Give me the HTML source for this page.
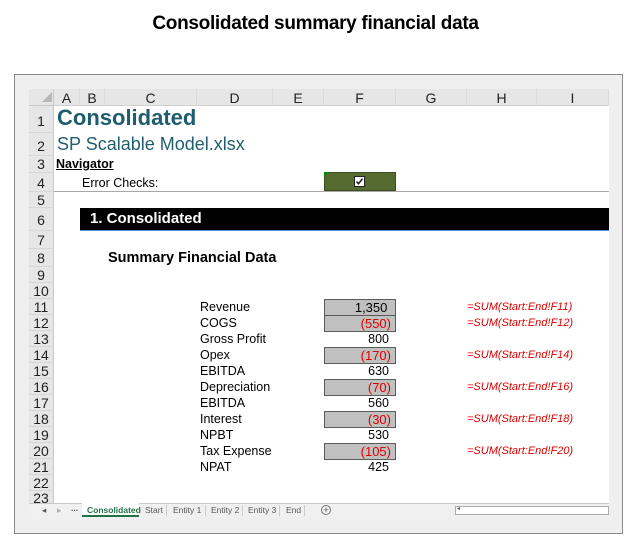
<!DOCTYPE html>
<html><head><meta charset="utf-8"><style>
*{margin:0;padding:0;box-sizing:border-box}
body{width:631px;height:556px;background:#fff;position:relative;overflow:hidden;font-family:"Liberation Sans",Arial,sans-serif}
.a{position:absolute}
.title{left:0;width:631px;top:13px;text-align:center;font-weight:bold;font-size:19px;letter-spacing:-0.3px;color:#000}
.frame{left:14px;top:74px;width:609px;height:460px;border:1px solid #8a8a8a;background:#efefef}
.grid{left:29px;top:89px;width:580px;height:429px;background:#fff;overflow:hidden}
.ch{top:89px;height:17px;background:#e6e6e6;border-right:1px solid #dadada;border-bottom:1px solid #d0d0d0;font-size:14px;text-align:center;line-height:18px;color:#222}
.rh{left:29px;width:25px;background:#e6e6e6;border-bottom:1px solid #d8d8d8;border-right:1px solid #c8c8c8;font-size:14px;text-align:center;color:#222}
.t{font-size:12.5px;color:#000;white-space:nowrap}
.box{background:#c0c0c0;border:1px solid #5a5a5a;font-size:13px;text-align:right;padding-right:4px;line-height:15px}
.red{color:#e00000}
.f{font-size:11px;font-style:italic;color:#e00000;left:467px;white-space:nowrap}
.tab{top:505px;font-size:8.5px;color:#555}
</style></head><body>
<div class="a title">Consolidated summary financial data</div>
<div class="a frame"></div>
<div class="a grid"></div>
<div class="a" style="left:29px;top:89px;width:25px;height:17px;background:#e6e6e6;border-right:1px solid #c8c8c8;border-bottom:1px solid #c8c8c8"></div>
<div class="a" style="left:42px;top:92px;width:0;height:0;border-left:10px solid transparent;border-bottom:10px solid #b8b8b8"></div>
<div class="a ch" style="left:54px;width:26px">A</div>
<div class="a ch" style="left:80px;width:25px">B</div>
<div class="a ch" style="left:105px;width:92px">C</div>
<div class="a ch" style="left:197px;width:76px">D</div>
<div class="a ch" style="left:273px;width:51px">E</div>
<div class="a ch" style="left:324px;width:72px">F</div>
<div class="a ch" style="left:396px;width:71px">G</div>
<div class="a ch" style="left:467px;width:70px">H</div>
<div class="a ch" style="left:537px;width:72px">I</div>
<div class="a rh" style="top:106px;height:27px;line-height:30px">1</div>
<div class="a rh" style="top:133px;height:23px;line-height:26px">2</div>
<div class="a rh" style="top:156px;height:17px;line-height:17px">3</div>
<div class="a rh" style="top:173px;height:19px;line-height:21px">4</div>
<div class="a rh" style="top:192px;height:16px;line-height:17px">5</div>
<div class="a rh" style="top:208px;height:23px;line-height:25px">6</div>
<div class="a rh" style="top:231px;height:18px;line-height:19px">7</div>
<div class="a rh" style="top:249px;height:18px;line-height:19px">8</div>
<div class="a rh" style="top:267px;height:16px;line-height:17px">9</div>
<div class="a rh" style="top:283px;height:16px;line-height:17px">10</div>
<div class="a rh" style="top:299px;height:16px;line-height:17px">11</div>
<div class="a rh" style="top:315px;height:16px;line-height:17px">12</div>
<div class="a rh" style="top:331px;height:16px;line-height:17px">13</div>
<div class="a rh" style="top:347px;height:16px;line-height:17px">14</div>
<div class="a rh" style="top:363px;height:16px;line-height:17px">15</div>
<div class="a rh" style="top:379px;height:16px;line-height:17px">16</div>
<div class="a rh" style="top:395px;height:16px;line-height:17px">17</div>
<div class="a rh" style="top:411px;height:16px;line-height:17px">18</div>
<div class="a rh" style="top:427px;height:16px;line-height:17px">19</div>
<div class="a rh" style="top:443px;height:16px;line-height:17px">20</div>
<div class="a rh" style="top:459px;height:16px;line-height:17px">21</div>
<div class="a rh" style="top:475px;height:16px;line-height:17px">22</div>
<div class="a rh" style="top:491px;height:12px;line-height:15px;overflow:hidden;border-bottom:none">23</div>
<div class="a" style="left:57px;top:105px;font-size:22px;font-weight:bold;color:#1f5d6e">Consolidated</div>
<div class="a" style="left:57px;top:134px;font-size:18px;color:#1f5d6e">SP Scalable Model.xlsx</div>
<div class="a t" style="left:56px;top:157px;font-weight:bold;text-decoration:underline">Navigator</div>
<div class="a t" style="left:82px;top:176px">Error Checks:</div>
<div class="a" style="left:54px;top:191px;width:555px;height:1px;background:#a8a8a8"></div>
<div class="a" style="left:324px;top:172px;width:72px;height:19px;background:#556b2f;border:1px solid #3d4d22"></div>
<div class="a" style="left:324px;top:172px;width:0;height:0;border-right:5px solid transparent;border-top:5px solid #0a8a0a"></div>
<svg class="a" style="left:354px;top:176px" width="11" height="11" viewBox="0 0 11 11"><rect x="0.5" y="0.5" width="10" height="10" fill="#fff" stroke="#222"/><path d="M2.5 5.5 L4.5 7.8 L8.5 2.8" stroke="#222" stroke-width="1.6" fill="none"/></svg>
<div class="a" style="left:80px;top:208px;width:529px;height:22px;background:#000;color:#fff;font-weight:bold;font-size:15px;line-height:22px;padding-left:10px">1. Consolidated</div>
<div class="a" style="left:80px;top:230px;width:529px;height:1px;background:#5b8fd0"></div>
<div class="a" style="left:108px;top:250px;font-size:14.5px;font-weight:bold">Summary Financial Data</div>

<div class="a t" style="left:200px;top:300px">Revenue</div>
<div class="a t" style="left:200px;top:316px">COGS</div>
<div class="a t" style="left:200px;top:332px">Gross Profit</div>
<div class="a t" style="left:200px;top:348px">Opex</div>
<div class="a t" style="left:200px;top:364px">EBITDA</div>
<div class="a t" style="left:200px;top:380px">Depreciation</div>
<div class="a t" style="left:200px;top:396px">EBITDA</div>
<div class="a t" style="left:200px;top:412px">Interest</div>
<div class="a t" style="left:200px;top:428px">NPBT</div>
<div class="a t" style="left:200px;top:444px">Tax Expense</div>
<div class="a t" style="left:200px;top:460px">NPAT</div>

<div class="a box" style="left:324px;top:299px;width:72px;height:17px">1,350&nbsp;</div>
<div class="a box red" style="left:324px;top:315px;width:72px;height:17px">(550)</div>
<div class="a t" style="left:324px;top:332px;width:65px;text-align:right">800</div>
<div class="a box red" style="left:324px;top:347px;width:72px;height:17px">(170)</div>
<div class="a t" style="left:324px;top:364px;width:65px;text-align:right">630</div>
<div class="a box red" style="left:324px;top:379px;width:72px;height:17px">(70)</div>
<div class="a t" style="left:324px;top:396px;width:65px;text-align:right">560</div>
<div class="a box red" style="left:324px;top:411px;width:72px;height:17px">(30)</div>
<div class="a t" style="left:324px;top:428px;width:65px;text-align:right">530</div>
<div class="a box red" style="left:324px;top:443px;width:72px;height:17px">(105)</div>
<div class="a t" style="left:324px;top:460px;width:65px;text-align:right">425</div>

<div class="a f" style="top:301px">=SUM(Start:End!F11)</div>
<div class="a f" style="top:317px">=SUM(Start:End!F12)</div>
<div class="a f" style="top:349px">=SUM(Start:End!F14)</div>
<div class="a f" style="top:381px">=SUM(Start:End!F16)</div>
<div class="a f" style="top:413px">=SUM(Start:End!F18)</div>
<div class="a f" style="top:445px">=SUM(Start:End!F20)</div>

<div class="a" style="left:29px;top:503px;width:580px;height:15px;background:#f0f0f0;border-top:1px solid #c8c8c8"></div>
<div class="a tab" style="left:42px;top:505px">◂</div>
<div class="a tab" style="left:57px;top:505px;color:#aaa">▸</div>
<div class="a tab" style="left:71px;top:503px;font-weight:bold">...</div>
<div class="a" style="left:82px;top:503px;width:57px;height:14px;background:#fff;border-bottom:2px solid #217346"></div>
<div class="a tab" style="left:87px;top:505px;color:#217346;font-weight:bold">Consolidated</div>
<div class="a tab" style="left:145px;top:505px">Start</div>
<div class="a tab" style="left:173px;top:505px">Entity 1</div>
<div class="a tab" style="left:211px;top:505px">Entity 2</div>
<div class="a tab" style="left:248px;top:505px">Entity 3</div>
<div class="a tab" style="left:286px;top:505px">End</div>
<div class="a" style="left:166px;top:505px;width:1px;height:11px;background:#ccc"></div>
<div class="a" style="left:205px;top:505px;width:1px;height:11px;background:#ccc"></div>
<div class="a" style="left:242px;top:505px;width:1px;height:11px;background:#ccc"></div>
<div class="a" style="left:279px;top:505px;width:1px;height:11px;background:#ccc"></div>
<div class="a" style="left:304px;top:505px;width:1px;height:11px;background:#ccc"></div>
<div class="a" style="left:321px;top:505px;width:10px;height:10px;border:1px solid #777;border-radius:50%;font-size:9px;line-height:8px;text-align:center;color:#555">+</div>
<div class="a" style="left:455px;top:506px;width:154px;height:9px;background:#fff;border:1px solid #aaa"></div>
<div class="a tab" style="left:457px;top:505px;font-size:6px">◂</div>
</body></html>
